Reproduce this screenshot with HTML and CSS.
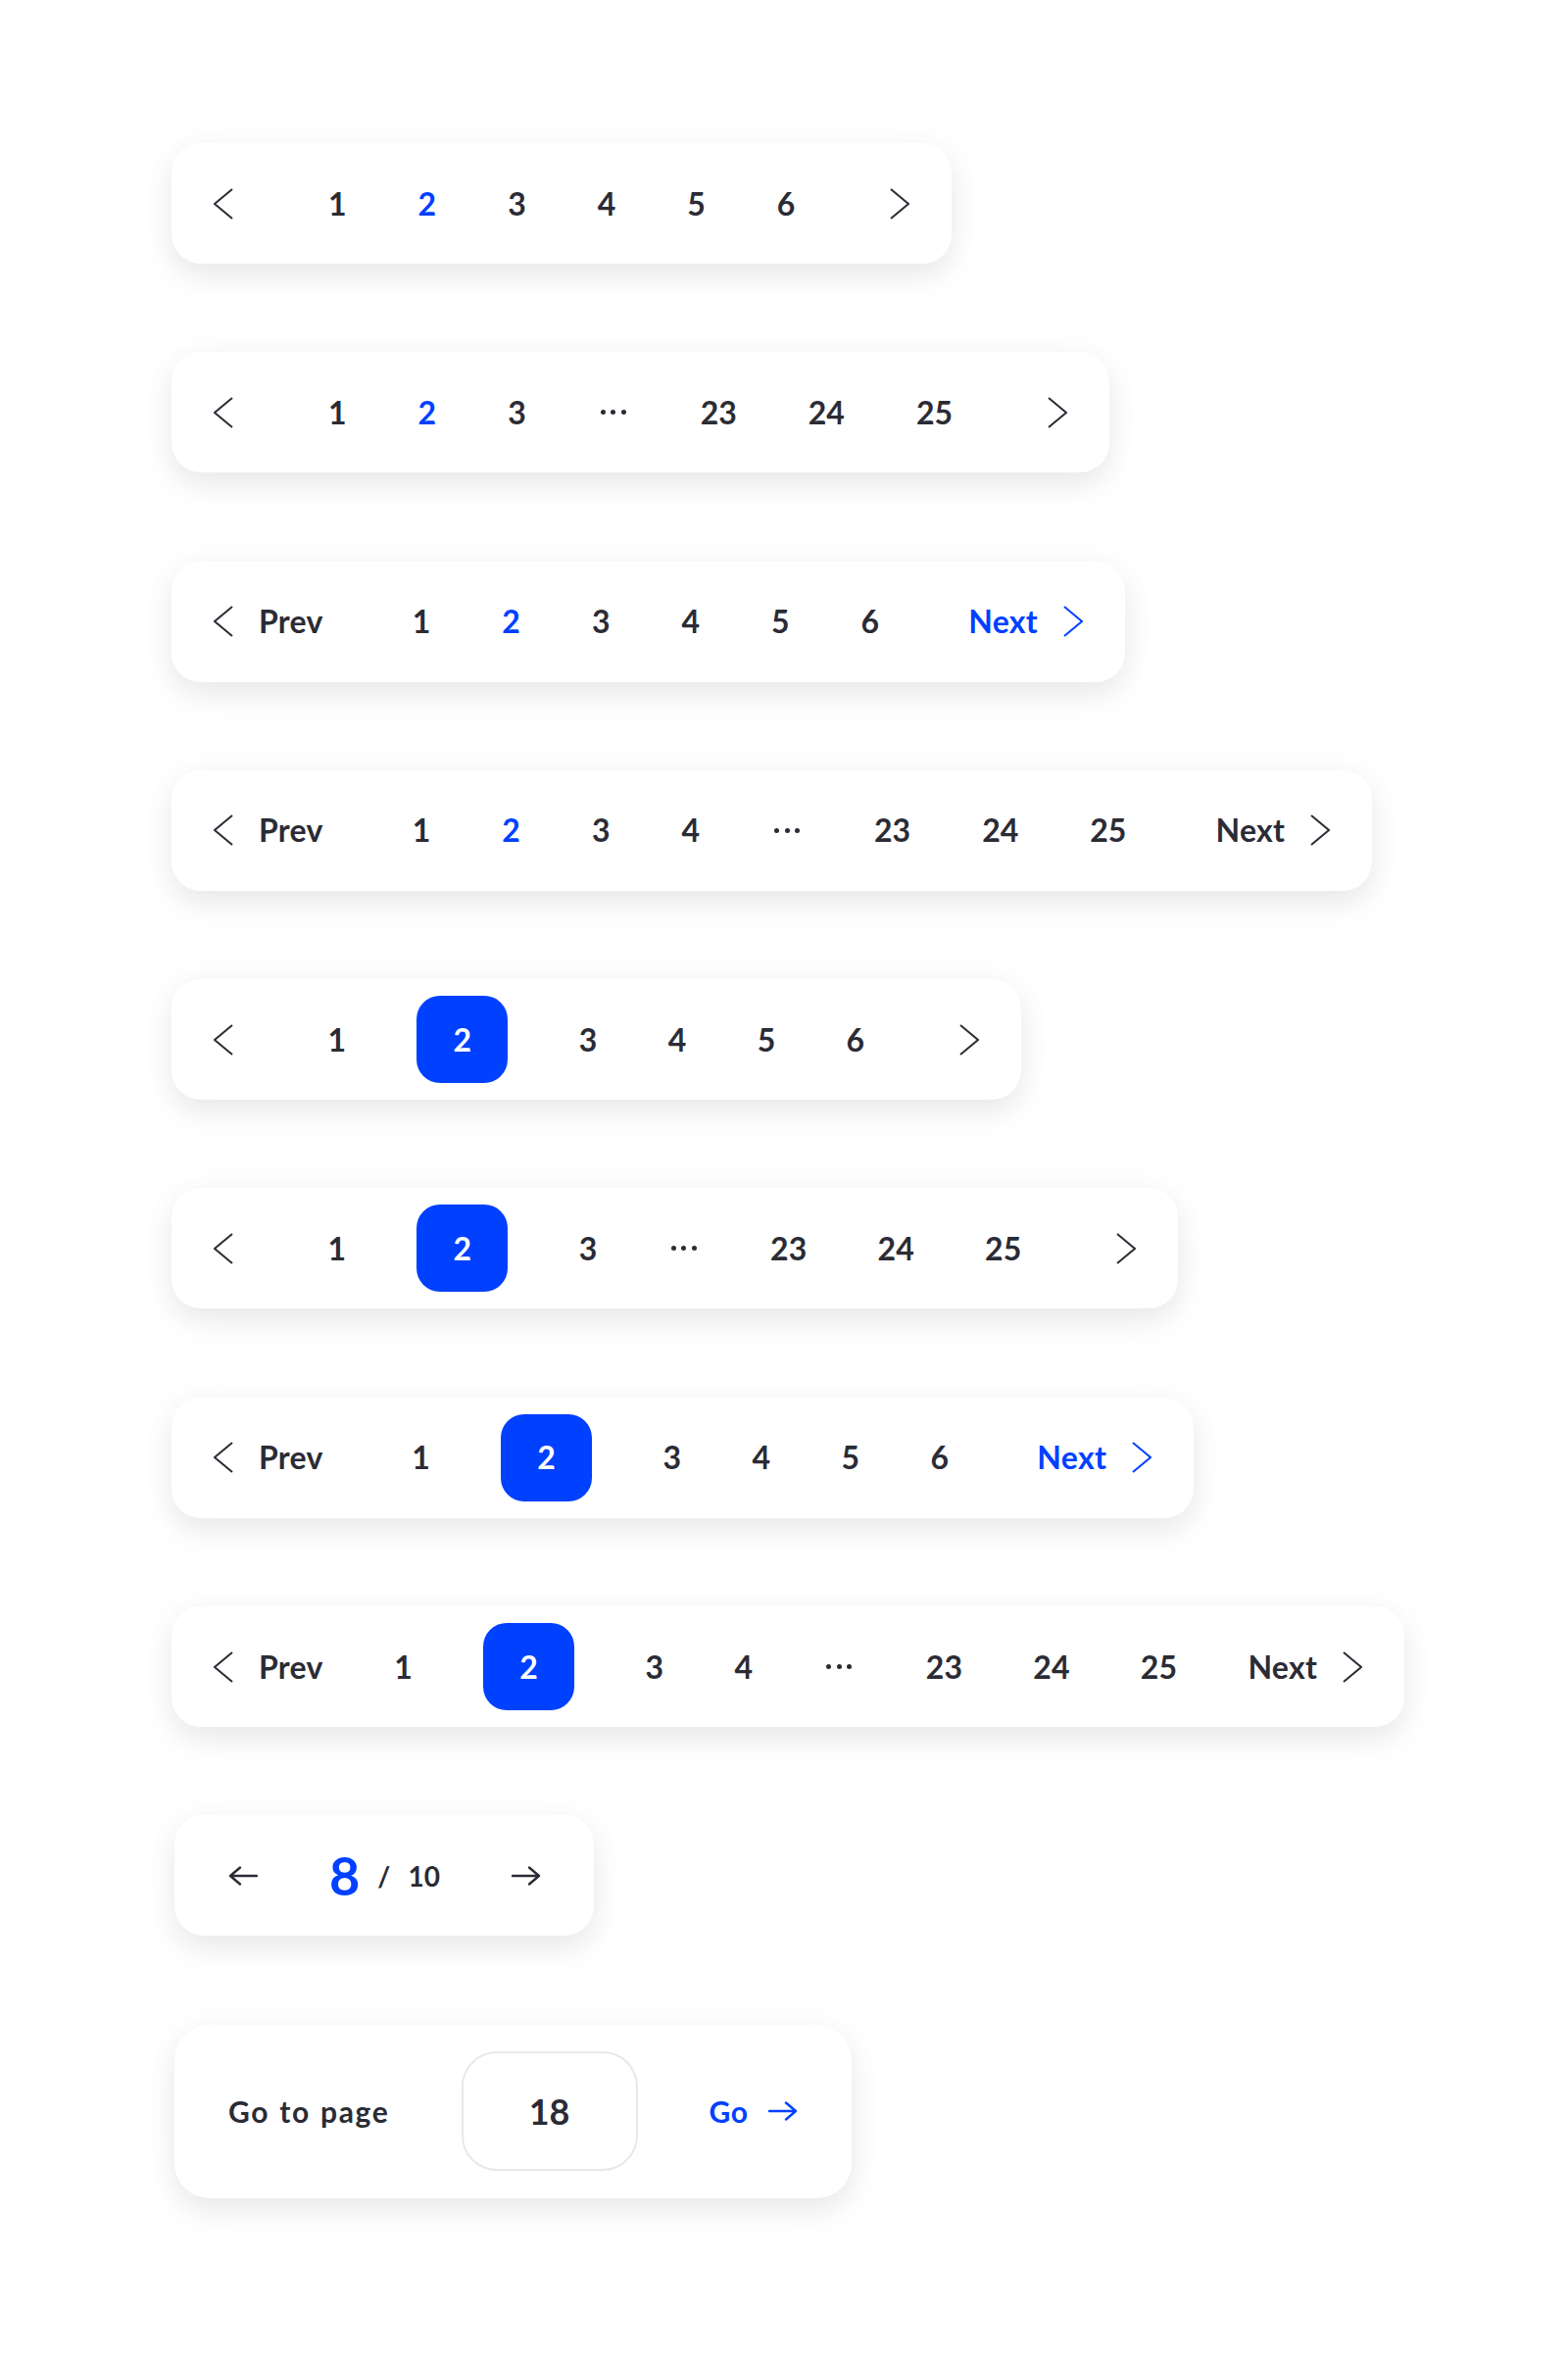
FILE: index.html
```html
<!DOCTYPE html>
<html lang="en">
<head>
<meta charset="utf-8">
<title>Pagination</title>
<link rel="stylesheet" href="styles.css">
</head>
<body>
<main class="stack">

  <nav class="card pager icons">
    <a class="nav nav-prev"><svg class="chev" viewBox="0 0 20 32"><polyline points="19,1 1,16 19,31"/></svg></a>
    <span class="page">1</span>
    <span class="page current">2</span>
    <span class="page">3</span>
    <span class="page">4</span>
    <span class="page">5</span>
    <span class="page">6</span>
    <a class="nav nav-next"><svg class="chev" viewBox="0 0 20 32"><polyline points="1,1 19,16 1,31"/></svg></a>
  </nav>

  <nav class="card pager icons">
    <a class="nav nav-prev"><svg class="chev" viewBox="0 0 20 32"><polyline points="19,1 1,16 19,31"/></svg></a>
    <span class="page">1</span>
    <span class="page current">2</span>
    <span class="page">3</span>
    <span class="dots"><i></i><i></i><i></i></span>
    <span class="page">23</span>
    <span class="page">24</span>
    <span class="page">25</span>
    <a class="nav nav-next"><svg class="chev" viewBox="0 0 20 32"><polyline points="1,1 19,16 1,31"/></svg></a>
  </nav>

  <nav class="card pager wide">
    <a class="nav nav-prev"><svg class="chev" viewBox="0 0 20 32"><polyline points="19,1 1,16 19,31"/></svg><span>Prev</span></a>
    <span class="page">1</span>
    <span class="page current">2</span>
    <span class="page">3</span>
    <span class="page">4</span>
    <span class="page">5</span>
    <span class="page">6</span>
    <a class="nav nav-next blue"><span>Next</span><svg class="chev" viewBox="0 0 20 32"><polyline points="1,1 19,16 1,31"/></svg></a>
  </nav>

  <nav class="card pager wide">
    <a class="nav nav-prev"><svg class="chev" viewBox="0 0 20 32"><polyline points="19,1 1,16 19,31"/></svg><span>Prev</span></a>
    <span class="page">1</span>
    <span class="page current">2</span>
    <span class="page">3</span>
    <span class="page">4</span>
    <span class="dots"><i></i><i></i><i></i></span>
    <span class="page">23</span>
    <span class="page">24</span>
    <span class="page">25</span>
    <a class="nav nav-next"><span>Next</span><svg class="chev" viewBox="0 0 20 32"><polyline points="1,1 19,16 1,31"/></svg></a>
  </nav>

  <nav class="card pager icons boxed">
    <a class="nav nav-prev"><svg class="chev" viewBox="0 0 20 32"><polyline points="19,1 1,16 19,31"/></svg></a>
    <span class="page">1</span>
    <span class="page active">2</span>
    <span class="page">3</span>
    <span class="page">4</span>
    <span class="page">5</span>
    <span class="page">6</span>
    <a class="nav nav-next"><svg class="chev" viewBox="0 0 20 32"><polyline points="1,1 19,16 1,31"/></svg></a>
  </nav>

  <nav class="card pager icons boxed">
    <a class="nav nav-prev"><svg class="chev" viewBox="0 0 20 32"><polyline points="19,1 1,16 19,31"/></svg></a>
    <span class="page">1</span>
    <span class="page active">2</span>
    <span class="page">3</span>
    <span class="dots"><i></i><i></i><i></i></span>
    <span class="page">23</span>
    <span class="page">24</span>
    <span class="page">25</span>
    <a class="nav nav-next"><svg class="chev" viewBox="0 0 20 32"><polyline points="1,1 19,16 1,31"/></svg></a>
  </nav>

  <nav class="card pager wide boxed">
    <a class="nav nav-prev"><svg class="chev" viewBox="0 0 20 32"><polyline points="19,1 1,16 19,31"/></svg><span>Prev</span></a>
    <span class="page">1</span>
    <span class="page active">2</span>
    <span class="page">3</span>
    <span class="page">4</span>
    <span class="page">5</span>
    <span class="page">6</span>
    <a class="nav nav-next blue"><span>Next</span><svg class="chev" viewBox="0 0 20 32"><polyline points="1,1 19,16 1,31"/></svg></a>
  </nav>

  <nav class="card pager tight boxed">
    <a class="nav nav-prev"><svg class="chev" viewBox="0 0 20 32"><polyline points="19,1 1,16 19,31"/></svg><span>Prev</span></a>
    <span class="page">1</span>
    <span class="page active">2</span>
    <span class="page">3</span>
    <span class="page">4</span>
    <span class="dots"><i></i><i></i><i></i></span>
    <span class="page">23</span>
    <span class="page">24</span>
    <span class="page">25</span>
    <a class="nav nav-next"><span>Next</span><svg class="chev" viewBox="0 0 20 32"><polyline points="1,1 19,16 1,31"/></svg></a>
  </nav>

  <nav class="card fraction">
    <a class="arrow"><svg viewBox="0 0 30 20"><path d="M29 10H2M12 1.5L2 10l10 8.5"/></svg></a>
    <span class="frac">
      <span class="frac-cur">8</span>
      <span class="frac-sep">/</span>
      <span class="frac-total">10</span>
    </span>
    <a class="arrow"><svg viewBox="0 0 30 20"><path d="M1 10h27M18 1.5L28 10l-10 8.5"/></svg></a>
  </nav>

  <form class="card goto">
    <label class="goto-label" for="goto-page">Go to page</label>
    <input class="goto-input" id="goto-page" type="text" value="18">
    <a class="goto-btn"><span>Go</span><svg viewBox="0 0 30 20"><path d="M1 10h27M18 1.5L28 10l-10 8.5"/></svg></a>
  </form>

</main>
</body>
</html>
```

FILE: styles.css
```css
* { box-sizing: border-box; }

html, body {
  margin: 0;
  background: #ffffff;
}

body {
  font-family: Lato, "Open Sans", sans-serif;
  font-weight: 700;
  color: #2b2b35;
}

.stack {
  display: flex;
  flex-direction: column;
  align-items: flex-start;
  gap: 90.3px;
  padding: 146px 0 150px 175px;
}

.card {
  display: flex;
  align-items: center;
  background: #ffffff;
  border-radius: 30px;
  box-shadow: 0 14px 30px rgba(0, 0, 0, 0.075), 0 0 40px rgba(0, 0, 0, 0.03);
}

/* ---------- numbered pager ---------- */
.pager {
  height: 123px;
  padding: 0 43px;
  gap: 73px;
  font-size: 32px;
  line-height: 1;
}

.pager.boxed { gap: 72.4px; }

.nav {
  display: inline-flex;
  align-items: center;
  gap: 26px;
  color: #2b2b35;
  letter-spacing: 0.3px;
  cursor: pointer;
}

.nav.blue { color: #0040ff; }

.chev {
  width: 20px;
  height: 32px;
  fill: none;
  stroke: currentColor;
  stroke-width: 2;
}

.icons .nav-prev { margin-right: 24px; }
.icons .nav-next { margin-left: 24px; }
.wide .nav-prev { margin-right: 18px; }
.wide .nav-next { margin-left: 18px; }
.tight .nav-prev,
.tight .nav-next { margin: 0; }

.page {
  display: inline-flex;
  align-items: center;
  justify-content: center;
}

.page.current { color: #0040ff; }

.page.active {
  width: 93px;
  height: 89px;
  border-radius: 24px;
  background: #0040ff;
  color: #ffffff;
}

.dots {
  display: inline-flex;
  align-items: center;
  justify-content: center;
  gap: 5.5px;
  width: 32px;
}

.dots i {
  width: 5px;
  height: 5px;
  border-radius: 50%;
  background: #2b2b35;
}

/* ---------- fraction pager ---------- */
.fraction {
  height: 123px;
  margin-left: 3px;
  padding: 0 54px 0 55px;
  gap: 73px;
  line-height: 1;
}

.arrow {
  display: inline-flex;
  color: #2b2b35;
}

.arrow svg,
.goto-btn svg {
  width: 30px;
  height: 20px;
  fill: none;
  stroke: currentColor;
  stroke-width: 2.4;
  stroke-linecap: round;
  stroke-linejoin: round;
}

.frac {
  display: inline-flex;
  align-items: center;
  gap: 18px;
}

.frac-cur {
  font-size: 54px;
  color: #0040ff;
}

.frac-sep,
.frac-total {
  font-size: 28px;
}

/* ---------- go to page ---------- */
.goto {
  height: 177px;
  margin: 0 0 0 3px;
  padding: 0 55px;
  border-radius: 36px;
  gap: 73px;
  line-height: 1;
}

.goto-label {
  font-size: 30px;
  letter-spacing: 1.7px;
  word-spacing: 1px;
}

.goto-input {
  width: 180px;
  height: 122px;
  padding: 0;
  border: 2px solid #e8e8e8;
  border-radius: 36px;
  background: #ffffff;
  font-family: Lato, "Open Sans", sans-serif;
  font-weight: 700;
  font-size: 36px;
  color: #2b2b35;
  text-align: center;
  outline: none;
}

.goto-btn {
  display: inline-flex;
  align-items: center;
  gap: 21px;
  font-size: 30px;
  letter-spacing: 0.5px;
  color: #0040ff;
}
```
